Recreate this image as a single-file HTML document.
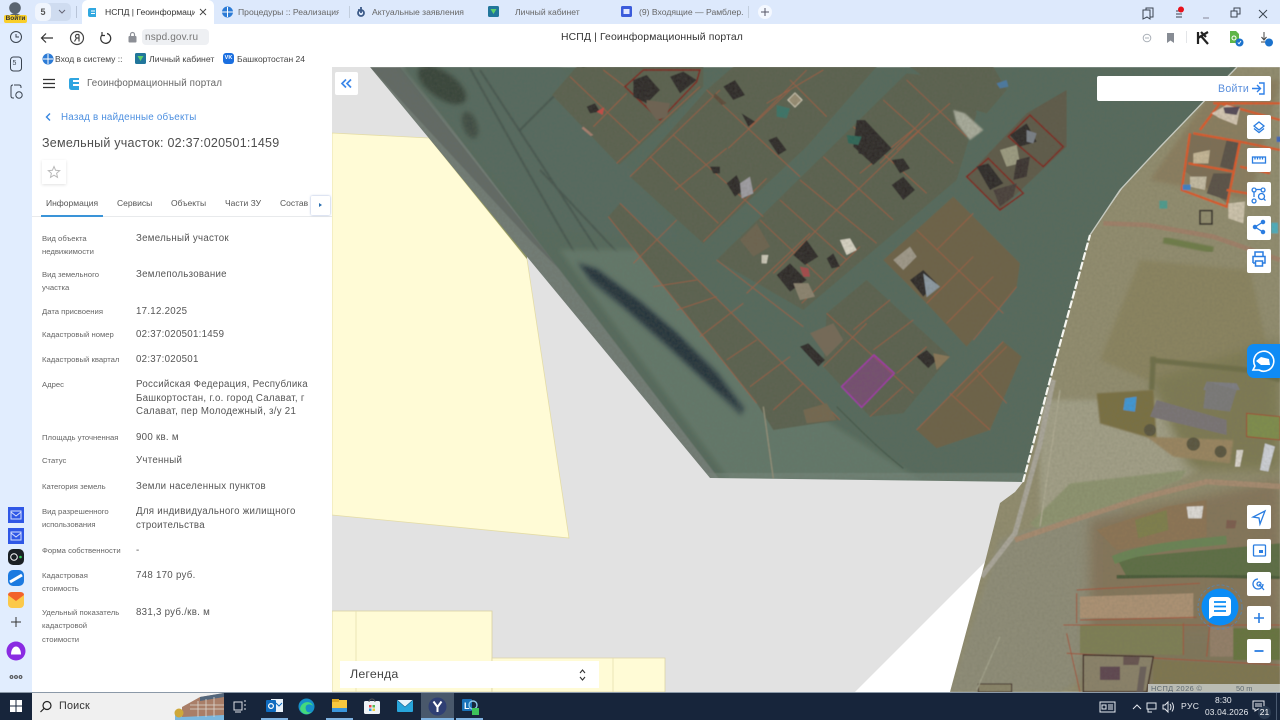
<!DOCTYPE html>
<html lang="ru"><head><meta charset="utf-8"><title>НСПД | Геоинформационный портал</title>
<style>
html,body{margin:0;padding:0;width:1280px;height:720px;overflow:hidden;background:#fff;font-family:"Liberation Sans",sans-serif}
.t{position:absolute;white-space:nowrap;line-height:1}
.b{position:absolute;background:#fff;border-radius:2px}
.l{position:absolute;left:42px;font-size:7.7px;line-height:13.4px;color:#666;white-space:nowrap}
.v{position:absolute;left:136px;margin-top:1px;font-size:9.7px;line-height:13.6px;color:#555;letter-spacing:.28px;white-space:nowrap}
.tab{position:absolute;font-size:8.6px;color:#666;white-space:nowrap;line-height:1;top:8px}
svg{position:absolute;overflow:visible}
</style></head><body>

<!-- MAP -->
<svg style="left:332px;top:67px" width="948" height="625" viewBox="332 67 948 625">
<defs>
<filter id="bl" x="-20%" y="-20%" width="140%" height="140%"><feGaussianBlur stdDeviation="2.5"/></filter>
<filter id="bw" x="-20%" y="-20%" width="140%" height="140%"><feGaussianBlur stdDeviation="1.6"/></filter>
<filter id="bs" x="-20%" y="-20%" width="140%" height="140%"><feGaussianBlur stdDeviation=".5"/></filter>
<filter id="bb" x="-20%" y="-20%" width="140%" height="140%"><feGaussianBlur stdDeviation="6"/></filter>
<filter id="all" x="0" y="0" width="100%" height="100%"><feGaussianBlur stdDeviation=".55"/></filter>
<filter id="noise" x="0" y="0" width="100%" height="100%"><feTurbulence type="fractalNoise" baseFrequency=".4" numOctaves="2" seed="4"/><feColorMatrix values="0 0 0 0 .15  0 0 0 0 .15  0 0 0 0 .1  0 0 0 .4 -.1"/></filter>
<clipPath id="dk"><polygon points="370,67 1237,67 1160,147 1120,190 1090,235 1050,380 1023,482 710,478"/></clipPath>
<clipPath id="sat"><polygon points="1230,67 1280,67 1280,692 950,692 985,562 1000,503 1015,492 1023,482 1050,380 1090,235 1135,170"/></clipPath>
</defs>
<rect x="332" y="67" width="948" height="625" fill="#e2e2e2"/>
<polygon points="985,562 950,692 855,692" fill="#fff"/>
<!-- yellow -->
<polygon points="332,133 429,138 527,259 569,538 332,515" fill="#fffbd6" stroke="#e4dca6" stroke-width=".8"/>
<polygon points="429,138 445,140 459,149 527,230 527,259" fill="#8d9462"/>
<polygon points="332,611 492,611 492,692 332,692" fill="#fffbd6" stroke="#d8d0a0" stroke-width=".8"/>
<line x1="356" y1="611" x2="356" y2="692" stroke="#e6dfae" stroke-width=".8"/>
<polygon points="492,658 665,658 665,692 492,692" fill="#fffbd6" stroke="#dcd4a6" stroke-width=".8"/>
<line x1="613" y1="658" x2="613" y2="692" stroke="#e6dfae" stroke-width=".8"/>

<!-- satellite base -->
<g clip-path="url(#sat)"><g filter="url(#all)">
<rect x="940" y="67" width="340" height="625" fill="#928d6f"/>
<polygon points="1040,400 1160,400 1200,470 1040,530" fill="#a3a088" filter="url(#bl)"/>
<polygon points="1000,540 1120,500 1160,640 1060,692 950,692" fill="#8f8d78" filter="url(#bl)"/>
<polygon points="1140,260 1250,270 1270,360 1170,390 1100,360" fill="#8b8460" filter="url(#bl)"/>
<polygon points="1150,180 1250,200 1280,80 1220,80" fill="#8b7e5e" filter="url(#bl)"/>
<polygon points="1150,380 1280,340 1280,470 1190,470" fill="#7e7a52" filter="url(#bb)"/>
<polygon points="1090,520 1280,480 1280,640 1090,640" fill="#85745a" filter="url(#bb)"/>
<polygon points="1090,630 1280,630 1280,692 1080,692" fill="#80765a" filter="url(#bb)"/>
<!-- z5 features -->
<g transform="translate(1080 70) scale(.3333)" fill="none">
<path d="M330,190 L310,300 L440,400 L480,215 Z" fill="#7d6e55"/>
<path d="M440,210 L480,220 L460,300 L420,290Z M400,310 L455,310 L440,390 L380,370Z" fill="#5a5148"/>
<path d="M340,190 L480,215 L600,240 M330,190 L305,360 L440,410 L480,215 M325,280 L460,305 M360,180 L420,100 L600,150 M400,100 L600,100 M440,360 L560,380 M480,290 L570,310" stroke="#dc5a2a" stroke-width="7"/>
<polygon points="395,130 440,105 480,115 470,165 420,145" fill="#d6c8b4"/>
<polygon points="430,112 480,110 470,135 435,130" fill="#554a58"/>
<polygon points="340,250 390,240 385,280 340,280" fill="#c7b898"/>
<polygon points="330,320 380,320 375,360 330,350" fill="#c5bca4"/>
<rect x="308" y="344" width="24" height="16" fill="#3c80c8"/>
<polygon points="445,400 495,395 490,460 445,445" fill="#cfc5ae"/>
<rect x="360" y="422" width="36" height="40" fill="none" stroke="#35302a" stroke-width="5"/>
<rect x="238" y="392" width="24" height="24" fill="#4d9d90"/>
<rect x="574" y="458" width="20" height="32" fill="#4db0c0"/>
<rect x="590" y="200" width="20" height="16" fill="#3c66c0"/>
<path d="M70,460 L200,465 L400,500 L600,570" stroke="#a08068" stroke-width="14"/>
<path d="M250,510 L400,540" stroke="#6e7c48" stroke-width="20" filter="url(#bl)"/>
<path d="M210,870 L500,900 L600,930 M220,860 L215,960" stroke="#6e6e48" stroke-width="16" filter="url(#bl)"/>
<polygon points="380,935 470,940 480,960 370,960" fill="#7e7e84"/>
</g>
<!-- z10 features -->
<g transform="translate(940 380) scale(.3333)" fill="none">
<polygon points="470,40 640,30 650,180 480,130" fill="#7a6f42" filter="url(#bl)"/>
<polygon points="620,170 880,180 870,250 700,230" fill="#9a8560" filter="url(#bl)"/>
<polygon points="650,60 860,120 860,165 630,110" fill="#7a7476"/>
<polygon points="800,5 890,30 870,95 790,85" fill="#7b7a7a"/>
<polygon points="555,55 590,50 585,95 550,90" fill="#3f98d8"/>
<polygon points="920,100 1020,110 1020,180 920,170" fill="#7f8e4d" stroke="#a34a30" stroke-width="3"/>
<polygon points="890,210 910,210 900,260 885,260" fill="#ddd8d0"/>
<polygon points="975,190 1005,200 985,275 960,270" fill="#d0d3da"/>
<circle cx="630" cy="150" r="18" fill="#5a5640"/><circle cx="760" cy="192" r="20" fill="#5a5640"/><circle cx="842" cy="215" r="18" fill="#5a5640"/>
<path d="M340,0 L300,190 L250,370 L225,460 L125,590" stroke="#aba79b" stroke-width="15"/>
<path d="M225,480 L400,420 L620,350 L800,305 L1030,320" stroke="#a78b70" stroke-width="16"/>
<polygon points="270,430 390,310 740,270 720,300 500,380 290,445" fill="#8e9470" filter="url(#bl)"/>
<polygon points="470,450 680,380 800,360 800,470 530,510" fill="#8d7454"/>
<polygon points="585,420 680,390 685,450 595,475" fill="#7f7f4d"/>
<polygon points="740,380 790,378 785,415 745,415" fill="#dfdcd8"/>
<polygon points="860,420 890,422 885,445 858,445" fill="#7c5c4e"/>
<polygon points="530,535 1020,490 1020,590 560,590" fill="#5c6e44"/>
<path d="M520,540 C620,500 760,490 860,480" stroke="#6a8454" stroke-width="26" filter="url(#bs)"/>
<path d="M530,590 C620,590 800,580 1020,595" stroke="#4a5a38" stroke-width="12" filter="url(#bs)"/>
<polygon points="420,650 760,640 760,715 420,715" fill="#ad9274"/>
<polygon points="420,735 730,730 730,825 420,820" fill="#7e7f55"/>
<polygon points="810,740 880,740 880,830 810,830" fill="#947f68"/>
<polygon points="880,745 1020,745 1020,840 880,840" fill="#66743f"/>
<polygon points="640,840 1020,860 1020,936 640,936" fill="#7f7650"/>
<path d="M410,630 L780,610 M370,735 L1020,735 M410,640 L410,730 M380,820 L1020,855 M730,730 L730,825 M810,730 L800,830 M420,720 L770,712 M380,760 L420,936" stroke="#a5533a" stroke-width="3"/>
<polygon points="430,825 640,830 620,936 430,936" fill="#8b8269" stroke="#3c2622" stroke-width="4"/>
<polygon points="480,860 540,860 540,900 480,900" fill="#5e4650"/>
<polygon points="550,830 600,830 595,855 550,855" fill="#665350"/>
<polygon points="600,860 620,860 610,936 590,936" fill="#6a5f5a"/>
<rect x="115" y="912" width="100" height="24" fill="#8a8468" stroke="#3c2622" stroke-width="3"/>
<path d="M180,770 L110,930" stroke="#a3a28c" stroke-width="4" filter="url(#bs)"/>
<path d="M360,30 L300,440" stroke="#aeaa92" stroke-width="4" filter="url(#bs)"/>
</g>
<rect x="940" y="67" width="340" height="625" filter="url(#noise)"/>
</g></g>

<!-- dark imagery -->
<g clip-path="url(#dk)"><g filter="url(#all)">
<rect x="360" y="67" width="880" height="420" fill="#566b5d"/>
<polygon points="370,67 405,67 720,480 705,480" fill="#727c76"/>
<polygon points="370,67 400,67 560,270 530,240" fill="#626a66"/>
<polygon points="400,67 560,67 680,240 540,230" fill="#566a5e" filter="url(#bl)"/>
<ellipse cx="442" cy="85" rx="28" ry="13" transform="rotate(35 442 85)" fill="#39443b" filter="url(#bl)"/>
<ellipse cx="470" cy="125" rx="14" ry="7" transform="rotate(70 470 125)" fill="#414d45" filter="url(#bl)"/>
<path d="M470,68 C510,140 560,230 600,295 M540,170 L690,330 M480,70 L620,285 M590,60 L520,130" stroke="#475650" stroke-width="2" fill="none" filter="url(#bs)"/>
<polygon points="560,250 730,480 920,480 760,380 640,250" fill="#64786a" filter="url(#bl)"/>
<polygon points="577,262 597,268 640,300 677,332 718,372 745,408 741,416 715,392 670,350 625,310 590,282" fill="#33424a" opacity=".75" filter="url(#bl)"/>
<polygon points="582,266 597,271 640,303 677,335 716,375 742,410 715,388 670,346 625,306 592,278" fill="#26343c" filter="url(#bw)"/>
<rect x="700" y="473" width="340" height="12" fill="#7a8a80" opacity=".5"/>
<g transform="translate(560 70) scale(.3333)">
<g fill="#5b6250">
<polygon points="-24,75 50,-10 430,-10 430,50 177,285"/>
<polygon points="210,320 440,60 520,-10 950,-10 740,230 430,520"/>
<polygon points="470,570 1040,10 1230,30 1250,130 1190,330 730,720"/>
<polygon points="800,730 920,630 1170,860 1030,1030 930,1040 790,890"/>
<polygon points="145,440 180,400 840,1050 640,1080 590,1000"/>
<polygon points="1050,-10 1300,-10 1340,60 1280,130 1210,110"/>
</g>
<g fill="#6d6248">
<polygon points="970,570 1180,380 1380,580 1370,650 1220,830 1100,700"/>
<polygon points="1070,1080 1330,815 1385,860 1290,1080 1130,1135"/>
</g>
<polygon points="1220,320 1400,130 1520,60 1520,230 1320,420" fill="#5e5a4a"/>
<polygon points="1180,120 1215,130 1270,180 1230,210 1190,160" fill="#a9ac9c" filter="url(#bl)"/>
<g stroke="#aa5d40" stroke-width="2.4" fill="none" opacity=".9">
<path d="M30,20 L240,220 M170,280 L420,50 M100,170 L200,70 M130,0 L195,50"/>
<path d="M210,320 L480,60 M340,195 L610,440 M270,260 L475,460 M345,360 L500,235 M430,515 L620,325 M440,60 L720,320 M505,235 L690,60 M620,100 L790,0 M690,30 L800,140 M570,170 L740,0"/>
<path d="M600,450 L790,630 M660,390 L860,570 M720,330 L950,520 M790,260 L1000,450 M880,170 L1100,370 M970,90 L1180,280 M1040,30 L1220,200 M470,570 L730,770 M560,670 L750,490 M640,610 L880,370 M725,700 L900,530 M830,420 L1080,180 M900,310 L1070,170 M960,280 L1110,130 M1010,240 L1170,100"/>
<path d="M800,730 L1060,970 M880,780 L990,690 M940,840 L1060,750 M1010,910 L1100,830 M790,890 L920,760 M930,1040 L1030,950"/>
<path d="M1070,480 L1330,730 M1130,540 L1240,430 M1160,760 L1300,620 M1100,700 L1240,560 M1240,810 L1370,650"/>
<path d="M1190,980 L1340,830 M1070,1080 L1330,815 M1170,970 L1290,1080 M1250,900 L1340,1000"/>
<path d="M145,440 L590,1000 M180,400 L840,1050 M220,580 L350,450 M280,650 L410,630 M350,720 L470,680 M420,800 L550,700 M500,870 L590,810 M570,950 L690,860 M640,1020 L730,940"/>
</g>
<g fill="none" stroke="#7b2a22" stroke-width="5">
<polygon points="195,50 250,0 420,0 410,35 300,150"/>
<polygon points="1220,320 1285,265 1390,370 1320,420"/>
<polygon points="1345,200 1410,135 1510,230 1450,290"/>
</g>
<g fill="#2f2b2a">
<polygon points="220,30 260,15 300,60 260,100 220,80"/>
<polygon points="330,20 370,5 410,30 360,70"/>
<polygon points="260,90 330,100 320,140 290,150 260,110" fill="#6e6352"/>
<polygon points="80,110 105,100 120,125 90,130"/>
<polygon points="110,125 132,112 128,135" fill="#c94a44"/>
<polygon points="70,170 100,195 92,198 65,175" fill="#aa8070"/>
<polygon points="490,50 525,30 555,75 520,90"/>
<polygon points="465,70 500,100 485,105 460,80" fill="#5d4b3a"/>
<polygon points="545,130 585,155 565,170"/>
<polygon points="625,210 650,200 680,240 655,255"/>
<polygon points="650,105 690,115 680,145 650,140" fill="#3c7468"/>
<rect x="690" y="75" width="30" height="30" transform="rotate(45 705 90)" fill="#998e74" stroke="#cfc8b4" stroke-width="3"/>
<polygon points="890,150 915,150 995,235 940,285 880,230"/>
<polygon points="860,195 905,200 895,225 865,220" fill="#2e6658"/>
<polygon points="895,235 920,235 915,255 895,250"/>
<polygon points="995,270 1030,265 1050,295 1020,310"/>
<polygon points="995,345 1030,320 1065,360 1030,390"/>
<polygon points="450,290 480,290 480,310 460,310"/>
<polygon points="500,340 530,315 550,360 525,380"/>
<polygon points="540,340 570,320 580,370 545,385" fill="#a09ea4"/>
<polygon points="700,555 740,510 775,560 735,585"/>
<polygon points="800,565 820,550 840,590 815,595"/>
<polygon points="840,510 870,505 890,540 860,555" fill="#d9d5c6"/>
<polygon points="650,615 690,580 740,630 690,665"/>
<polygon points="720,590 745,595 750,620 730,620" fill="#a84a4c"/>
<polygon points="700,640 745,640 765,680 720,690" fill="#8d8470"/>
<polygon points="605,555 625,555 620,580 605,580" fill="#d0ccbc"/>
<polygon points="540,510 590,460 630,530 580,560" fill="#6d6450"/>
<polygon points="1050,630 1090,600 1130,640 1090,680"/>
<polygon points="1090,610 1140,650 1100,682" fill="#8d9aa4"/>
<polygon points="1000,570 1050,530 1070,560 1030,600" fill="#a0998a"/>
<polygon points="720,830 745,820 795,870 775,890"/>
<polygon points="750,790 820,760 850,810 800,860" fill="#756b58"/>
<polygon points="1070,860 1100,840 1130,870 1105,895"/>
<polygon points="1120,850 1170,860 1130,900" fill="#8a7758"/>
<polygon points="730,1020 800,1000 830,1050 740,1060" fill="#746850"/>
<polygon points="1250,290 1285,280 1330,340 1290,360"/>
<polygon points="1300,360 1370,340 1360,380 1320,410" fill="#4a403c"/>
<polygon points="1350,195 1400,160 1430,215 1380,230"/>
<polygon points="1320,240 1370,225 1380,280 1340,290" fill="#9d9c82"/>
<polygon points="1370,270 1410,260 1400,320 1360,330" fill="#3c3432"/>
<polygon points="1400,180 1430,190 1420,220 1400,215" fill="#7a8088"/>
<polygon points="1310,40 1340,30 1345,50 1320,55" fill="#4a7aa4"/>
</g>
<polygon points="845,950 942,855 1003,910 905,1012" fill="#a030a8" fill-opacity=".38" stroke="#a832b0" stroke-width="4"/>
<path d="M610,1010 L640,1225" stroke="#94907a" stroke-width="4" fill="none"/>
<path d="M830,1010 C900,1080 960,1140 1030,1195" stroke="#46594c" stroke-width="4" fill="none"/>
</g>
<rect x="360" y="67" width="880" height="420" filter="url(#noise)"/>
</g></g>
<!-- edge -->
<path d="M1090,235 L1120,190 L1160,147 L1237,67" stroke="#c4c8be" stroke-width="1.400" fill="none"/>
<path d="M1023,482 L1050,380 L1090,235" stroke="#f6f6f0" stroke-width="2.200" fill="none" stroke-dasharray="8 2"/>
<!-- scale -->
<rect x="1148" y="684" width="132" height="8" fill="#cfd4d4" fill-opacity=".75"/>
<text x="1151" y="691" font-family="Liberation Sans,sans-serif" font-size="7.400" fill="#5f6a72" letter-spacing=".4">НСПД 2026 ©</text>
<text x="1236" y="691" font-family="Liberation Sans,sans-serif" font-size="7.400" fill="#5f6a72">50 m</text>
</svg>

<!-- map controls -->
<div class="b" style="left:335px;top:72px;width:23px;height:23px"></div>
<svg style="left:335px;top:72px" width="23" height="23" fill="none" stroke="#3b86e8" stroke-width="1.700"><path d="M11,7.500 L7,11.500 L11,15.500 M16,7.500 L12,11.500 L16,15.500"/></svg>

<div class="b" style="left:1097px;top:76px;width:174px;height:25px"></div>
<div class="t" style="left:1218px;top:84px;font-size:10.600px;color:#5a8fdc;letter-spacing:.3px">Войти</div>
<svg style="left:1251px;top:81px" width="15" height="15" fill="none" stroke="#2f80e8" stroke-width="1.400"><path d="M1,7.500 H9 M6,4 L9.500,7.500 L6,11 M8,2 H13 V13 H8"/></svg>

<div class="b" style="left:1247px;top:115px;width:24px;height:24px"></div>
<div class="b" style="left:1247px;top:148px;width:24px;height:24px"></div>
<div class="b" style="left:1247px;top:182px;width:24px;height:24px"></div>
<div class="b" style="left:1247px;top:216px;width:24px;height:24px"></div>
<div class="b" style="left:1247px;top:249px;width:24px;height:24px"></div>
<div class="b" style="left:1247px;top:505px;width:24px;height:24px"></div>
<div class="b" style="left:1247px;top:539px;width:24px;height:24px"></div>
<div class="b" style="left:1247px;top:572px;width:24px;height:24px"></div>
<div class="b" style="left:1247px;top:606px;width:24px;height:24px"></div>
<div class="b" style="left:1247px;top:639px;width:24px;height:24px"></div>
<svg style="left:1247px;top:115px" width="24" height="560" fill="none" stroke="#2a7de1" stroke-width="1.300">
<path d="M12,7 L17,11 L12,15 L7,11Z M7,13.500 L12,17.500 L17,13.500"/>
<rect x="5.500" y="42" width="13" height="6" /><path d="M8,42 v2.500 M10.500,42 v2.500 M13,42 v2.500 M15.500,42 v2.500"/>
<path d="M7,73 a2,2 0 1 0 .1,0 M16,73 a2,2 0 1 0 .1,0 M7,84 a2,2 0 1 0 .1,0 M9,74.500 H14 M7,77 V82" /><circle cx="14.500" cy="81.500" r="3"/><path d="M16.600,83.600 L18.500,85.600"/>
<path d="M16,107 L8,112 L16,117" /><circle cx="16" cy="107" r="1.600" fill="#2a7de1"/><circle cx="8" cy="112" r="1.600" fill="#2a7de1"/><circle cx="16" cy="117" r="1.600" fill="#2a7de1"/>
<path d="M8,141 V137 H16 V141 M6,148 V141.500 H18 V148 H15 M9,148 H6 M8.500,146 H15.500 V151 H8.500Z" stroke-width="1.500"/>
<path d="M18,396 L6,402 L12,403 L13,409Z" />
<rect x="6.500" y="430" width="12" height="11" rx="1"/><rect x="12" y="435" width="4" height="3" fill="#2a7de1" stroke="none"/>
<path d="M11,464 a5,5 0 1 0 5,5"/><circle cx="12" cy="469" r="2"/><path d="M12,469 L17,475"/>
<path d="M7,503 H17 M12,498 V508" stroke-width="1.600"/>
<path d="M7.500,536 H16.500" stroke-width="1.800"/>
</svg>

<!-- floating blue -->
<div style="position:absolute;left:1247px;top:344px;width:33px;height:34px;background:#0f8bf5;border-radius:7px 0 0 7px"></div>
<svg style="left:1250px;top:349px" width="26" height="25" fill="none" stroke="#fff" stroke-width="1.600"><path d="M3,21 L5,17 a10,10 0 1 1 4,4Z"/><path d="M6,12 L11,8 L19,10 L20,16 L11,16Z" fill="#fff" stroke="none"/></svg>
<svg style="left:1196px;top:583px" width="48" height="48" fill="none"><circle cx="24" cy="24" r="22" stroke="#4f88c0" stroke-width="1" stroke-dasharray="3 2" opacity=".7"/><circle cx="24" cy="24" r="18.500" fill="#0a8cf5"/><path d="M13,18 a4,4 0 0 1 4,-4 H31 a4,4 0 0 1 4,4 V29 a4,4 0 0 1 -4,4 H17 L13,36Z" fill="#fff"/><path d="M18,19 H30 M18,23.500 H30 M18,28 H30" stroke="#0a8cf5" stroke-width="1.800"/></svg>

<!-- legend -->
<div style="position:absolute;left:340px;top:661px;width:259px;height:27px;background:#fff"></div>
<div class="t" style="left:350px;top:668px;font-size:12.400px;color:#444;letter-spacing:.2px">Легенда</div>
<svg style="left:578px;top:668px" width="9" height="14" fill="none" stroke="#333" stroke-width="1.100"><path d="M2,5 L4.500,2 L7,5 M2,9 L4.500,12 L7,9"/></svg>

<!-- left strip -->
<div style="position:absolute;left:0;top:24px;width:32px;height:668px;background:#e1edfe"></div>
<!-- tab strip -->
<div style="position:absolute;left:0;top:0;width:1280px;height:24px;background:#dde9fc"></div>
<div style="position:absolute;left:32px;top:24px;width:1248px;height:43px;background:#fff;border-radius:6px 0 0 0"></div>
<div style="position:absolute;left:82px;top:0;width:132px;height:24px;background:#fff;border-radius:6px 6px 0 0"></div>

<!-- profile -->
<svg style="left:6px;top:1px" width="20" height="20"><circle cx="9" cy="7" r="5.800" fill="#5a6470"/><path d="M2,17 C3,11 15,11 16,17Z" fill="#5a6470"/></svg>
<div style="position:absolute;left:4px;top:15px;width:23px;height:8px;background:#f9cf2b;border-radius:2px;font-size:6.500px;line-height:8px;text-align:center;color:#333;font-weight:bold">Войти</div>
<!-- workspace pill -->
<div style="position:absolute;left:35px;top:3px;width:36px;height:18px;background:#cfdcf0;border-radius:5px"></div>
<div style="position:absolute;left:35px;top:3px;width:16px;height:18px;background:#f0f5fd;border-radius:5px;text-align:center;font-size:9px;line-height:18px;color:#555;font-weight:bold">5</div>
<svg style="left:57px;top:8px" width="10" height="8" fill="none" stroke="#667" stroke-width="1"><path d="M2,2 L5,5 L8,2"/></svg>
<div style="position:absolute;left:76px;top:6px;width:1px;height:12px;background:#b8c4d8"></div>

<!-- tabs -->
<svg style="left:87px;top:7px" width="11" height="11"><path d="M3,1 H9 V10 H3 Q1,10 1,8 V3 Q1,1 3,1Z" fill="#31a8e0"/><path d="M4,4 H8 M4,6.500 H8" stroke="#fff" stroke-width="1"/></svg>
<div class="tab" style="left:105px;color:#333;width:90px;overflow:hidden">НСПД | Геоинформаци</div>
<svg style="left:199px;top:8px" width="8" height="8" stroke="#444" stroke-width=".9"><path d="M1,1 L7,7 M7,1 L1,7"/></svg>
<svg style="left:221px;top:6px" width="13" height="12"><circle cx="6.500" cy="6" r="5.500" fill="#2c7bd6"/><path d="M1,6 H12 M6.500,1 V11" stroke="#fff" stroke-width="1"/></svg>
<div class="tab" style="left:238px;width:101px;overflow:hidden">Процедуры :: Реализация</div>
<div style="position:absolute;left:349px;top:6px;width:1px;height:12px;background:#c2cede"></div>
<svg style="left:355px;top:6px" width="11" height="12"><path d="M6,1 V7 M3,4 H5 M3,7 a3,3 0 1 0 6,0 a3,3 0 1 0 -6,0" stroke="#3c5a88" stroke-width="1.800" fill="none"/></svg>
<div class="tab" style="left:372px">Актуальные заявления</div>
<svg style="left:488px;top:6px" width="12" height="12"><rect width="11" height="11" rx="1.500" fill="#21769b"/><path d="M2.500,3 H8.500 L5.500,8Z" fill="#5fd06a"/></svg>
<div class="tab" style="left:515px">Личный кабинет</div>
<svg style="left:621px;top:6px" width="12" height="12"><rect width="11" height="11" rx="1.500" fill="#3b5bdb"/><rect x="2.500" y="3" width="6" height="5" fill="#dfe6ff"/></svg>
<div class="tab" style="left:639px;width:106px;overflow:hidden">(9) Входящие — Рамблер.</div>
<div style="position:absolute;left:748px;top:6px;width:1px;height:12px;background:#c2cede"></div>
<div style="position:absolute;left:758px;top:5px;width:14px;height:14px;border-radius:50%;background:#f4f8ff"></div>
<svg style="left:760px;top:7px" width="10" height="10" stroke="#556" stroke-width="1"><path d="M1,5 H9 M5,1 V9"/></svg>

<!-- window controls -->
<svg style="left:1140px;top:4px" width="140" height="18" fill="none" stroke="#3a4450" stroke-width="1">
<path d="M3,6 H10 V15 L7,13 L3,15Z M6,6 V4 H13 V13 H10"/>
<path d="M36,7 H42 M36,10 H42 M36,13 H42"/><circle cx="41" cy="5.500" r="3" fill="#e8121c" stroke="none"/>
<path d="M63,14 H69" stroke="#889"/>
<path d="M91,7 H97 V13 H91Z M94,7 V4 H100 V10 H97" />
<path d="M119,6 L127,14 M127,6 L119,14"/>
</svg>

<!-- nav bar -->
<svg style="left:40px;top:30px" width="80" height="16" fill="none" stroke="#333" stroke-width="1.200">
<path d="M2,8 H13 M6,3.500 L1.500,8 L6,12.500"/>
<circle cx="37" cy="8" r="6.500" stroke="#444"/><path d="M39,4.500 V11.500 M39,4.500 H36.500 A2,2 0 0 0 36.500,8 H39 M36.500,8 L34.500,11.500" stroke="#444"/>
<path d="M67,3.500 A5,5 0 1 1 62,5 M62,2 V5.500 H65" stroke="#333"/>
</svg>
<svg style="left:127px;top:30px" width="11" height="14"><rect x="1.500" y="6" width="8" height="6.500" rx="1" fill="#8c8f96"/><path d="M3.500,6 V4.500 a2,2 0 0 1 4,0 V6" fill="none" stroke="#8c8f96" stroke-width="1.200"/></svg>
<div style="position:absolute;left:142px;top:29px;width:67px;height:16px;background:#eef0f3;border-radius:4px"></div>
<div class="t" style="left:145px;top:33px;font-size:10px;color:#777;letter-spacing:.15px">nspd.gov.ru</div>
<div class="t" style="left:561px;top:33px;font-size:10.400px;color:#333;letter-spacing:.14px">НСПД | Геоинформационный портал</div>

<svg style="left:1140px;top:28px" width="140" height="22" fill="none">
<circle cx="7" cy="10" r="3.800" stroke="#aab0b8" stroke-width="1"/><path d="M5,10 H9" stroke="#aab0b8"/>
<path d="M27,5 H34 V15 L30.500,12.500 L27,15Z" fill="#878c94"/>
<path d="M58,4 L58,16 M58,10 L68,4 M61,8 L68,16 M61,4 L66,9" stroke="#222" stroke-width="2.200"/>
<path d="M90,3 H96 L99,6 V15 H90Z" fill="#5fb548"/><circle cx="94" cy="10" r="2" fill="none" stroke="#fff"/><circle cx="99.500" cy="14.500" r="4" fill="#1b72cc"/><path d="M97.800,14.500 L99,15.800 L101,13" stroke="#fff" stroke-width=".9"/>
<path d="M124,4 V11 M121.500,9 L124,12 L126.500,9 M121,14 H125" stroke="#444" stroke-width="1"/><circle cx="129" cy="14.500" r="4" fill="#1b72cc"/>
</svg>
<div style="position:absolute;left:1186px;top:31px;width:1px;height:12px;background:#e3e5e8"></div>

<!-- bookmarks -->
<svg style="left:42px;top:53px" width="12" height="12"><circle cx="6" cy="6" r="5.500" fill="#2c7bd6"/><path d="M1,6 H11 M6,1 V11" stroke="#fff"/></svg>
<div class="t" style="left:55px;top:55px;font-size:8.500px;color:#444;width:69px;overflow:hidden">Вход в систему :: Г</div>
<svg style="left:135px;top:53px" width="12" height="12"><rect width="11" height="11" rx="1.500" fill="#21769b"/><path d="M2.500,3 H8.500 L5.500,8Z" fill="#5fd06a"/></svg>
<div class="t" style="left:149px;top:55px;font-size:8.700px;color:#444">Личный кабинет</div>
<div style="position:absolute;left:223px;top:53px;width:11px;height:11px;background:#1b6fe0;border-radius:3px;color:#fff;font-size:5.500px;font-weight:bold;line-height:11px;text-align:center">VK</div>
<div class="t" style="left:237px;top:55px;font-size:8.500px;color:#444">Башкортостан 24</div>

<!-- left strip icons -->
<svg style="left:6px;top:28px" width="22" height="72" fill="none" stroke="#3a4450" stroke-width="1">
<circle cx="10" cy="9" r="5.500"/><path d="M10,6 V9 H13"/>
<rect x="4.500" y="29" width="11" height="14" rx="3"/>
<path d="M8,57 H13 Q15,57 15,59 V60 M5,67 V59 Q5,57 7,57 M5,67 V68 Q5,70 7,70 H8"/><circle cx="13" cy="67" r="3.200"/>
</svg>
<div class="t" style="left:12.500px;top:60px;font-size:7px;color:#3a4450">5</div>
<svg style="left:8px;top:507px" width="16" height="38"><rect width="16" height="16" fill="#2f57e6"/><rect x="3" y="4" width="10" height="8" fill="none" stroke="#d6e0ff"/><path d="M3,5 L8,9 L13,5" fill="none" stroke="#d6e0ff"/><rect y="21" width="16" height="16" fill="#2f57e6"/><rect x="3" y="25" width="10" height="8" fill="none" stroke="#d6e0ff"/><path d="M3,26 L8,30 L13,26" fill="none" stroke="#d6e0ff"/></svg>
<svg style="left:8px;top:549px" width="16" height="60"><rect width="16" height="16" rx="5" fill="#1a2024"/><circle cx="6" cy="8" r="3.300" fill="none" stroke="#fff" stroke-width="1"/><circle cx="12.500" cy="8" r="1.300" fill="#2ed158"/><rect y="21" width="16" height="16" rx="5" fill="#1c7ae0"/><path d="M2,33 L14,26" stroke="#fff" stroke-width="3"/><rect y="43" width="16" height="16" rx="4" fill="#fbc94a"/><path d="M0,46 Q0,43 4,43 H12 Q16,43 16,46 L8,52Z" fill="#f2622c"/></svg>
<svg style="left:10px;top:616px" width="12" height="12" stroke="#333" stroke-width="1"><path d="M1,6 H11 M6,1 V11"/></svg>
<svg style="left:6px;top:641px" width="20" height="20"><circle cx="10" cy="10" r="9.500" fill="#8a2be2"/><path d="M5,13.500 C5,9 7,5.500 10,5.500 C13,5.500 15,9 15,13.500Z" fill="#fff"/></svg>
<svg style="left:9px;top:674px" width="15" height="6" fill="none" stroke="#444" stroke-width="1"><circle cx="2.500" cy="3" r="1.400"/><circle cx="7" cy="3" r="1.400"/><circle cx="11.500" cy="3" r="1.400"/></svg>

<!-- sidebar -->
<div style="position:absolute;left:32px;top:67px;width:300px;height:625px;background:#fff"></div>
<svg style="left:43px;top:78px" width="13" height="11" stroke="#333" stroke-width="1.300"><path d="M0,1.500 H12 M0,5.500 H12 M0,9.500 H12"/></svg>
<svg style="left:68px;top:77px" width="13" height="14"><path d="M3,1 H11 V3 H5 V5 H11 V7 H5 V9 H11 V13 H4 Q1,13 1,10 V3 Q1,1 3,1Z" fill="#2fa5e0"/></svg>
<div class="t" style="left:87px;top:79px;font-size:9.800px;color:#666;letter-spacing:.14px">Геоинформационный портал</div>

<svg style="left:45px;top:112px" width="7" height="10" fill="none" stroke="#3585e0" stroke-width="1.400"><path d="M5,1.500 L1.500,5 L5,8.500"/></svg>
<div class="t" style="left:61px;top:113px;font-size:9.800px;color:#4c8fe0;letter-spacing:.2px">Назад в найденные объекты</div>
<div class="t" style="left:42px;top:137px;font-size:12.500px;color:#4e4e4e;letter-spacing:.25px">Земельный участок: 02:37:020501:1459</div>
<div style="position:absolute;left:42px;top:160px;width:24px;height:24px;background:#fff;box-shadow:0 1px 3px rgba(0,0,0,.12)"></div>
<svg style="left:47px;top:165px" width="14" height="14" fill="none" stroke="#b8b8b8" stroke-width="1"><path d="M7,1.500 L8.600,5.300 L12.700,5.600 L9.600,8.300 L10.500,12.300 L7,10.200 L3.500,12.300 L4.400,8.300 L1.300,5.600 L5.400,5.300Z"/></svg>

<div class="t" style="left:46px;top:199px;font-size:8.500px;color:#555">Информация</div>
<div class="t" style="left:117px;top:199px;font-size:8.500px;color:#555">Сервисы</div>
<div class="t" style="left:171px;top:199px;font-size:8.500px;color:#555">Объекты</div>
<div class="t" style="left:225px;top:199px;font-size:8.500px;color:#555">Части ЗУ</div>
<div class="t" style="left:280px;top:199px;font-size:8.500px;color:#555">Состав</div>
<div style="position:absolute;left:32px;top:216px;width:300px;height:1px;background:#e8eaec"></div>
<div style="position:absolute;left:41px;top:215px;width:62px;height:1.500px;background:#3a94d8"></div>
<div style="position:absolute;left:311px;top:196px;width:19px;height:19px;background:#fff;box-shadow:0 0 2px rgba(60,100,180,.5);border-radius:1px"></div>
<div style="position:absolute;left:319px;top:203px;width:0;height:0;border-left:3px solid #2b6fb0;border-top:2.500px solid transparent;border-bottom:2.500px solid transparent"></div>

<div class="l" style="top:232px">Вид объекта<br>недвижимости</div>
<div class="v" style="top:231px">Земельный участок</div>
<div class="l" style="top:268px">Вид земельного<br>участка</div>
<div class="v" style="top:267px">Землепользование</div>
<div class="l" style="top:305px">Дата присвоения</div>
<div class="v" style="top:304px">17.12.2025</div>
<div class="l" style="top:328px">Кадастровый номер</div>
<div class="v" style="top:327px">02:37:020501:1459</div>
<div class="l" style="top:353px">Кадастровый квартал</div>
<div class="v" style="top:352px">02:37:020501</div>
<div class="l" style="top:378px">Адрес</div>
<div class="v" style="top:377px">Российская Федерация, Республика<br>Башкортостан, г.о. город Салават, г<br>Салават, пер Молодежный, з/у 21</div>
<div class="l" style="top:431px">Площадь уточненная</div>
<div class="v" style="top:430px">900 кв. м</div>
<div class="l" style="top:454px">Статус</div>
<div class="v" style="top:453px">Учтенный</div>
<div class="l" style="top:480px">Категория земель</div>
<div class="v" style="top:479px">Земли населенных пунктов</div>
<div class="l" style="top:505px">Вид разрешенного<br>использования</div>
<div class="v" style="top:504px">Для индивидуального жилищного<br>строительства</div>
<div class="l" style="top:544px">Форма собственности</div>
<div class="v" style="top:543px">-</div>
<div class="l" style="top:569px">Кадастровая<br>стоимость</div>
<div class="v" style="top:568px">748 170 руб.</div>
<div class="l" style="top:606px">Удельный показатель<br>кадастровой<br>стоимости</div>
<div class="v" style="top:605px">831,3 руб./кв. м</div>

<!-- taskbar -->
<div style="position:absolute;left:0;top:693px;width:1280px;height:27px;background:#17253b"></div>
<div style="position:absolute;left:0;top:692px;width:1280px;height:1px;background:#8b99a8"></div>
<svg style="left:10px;top:700px" width="12" height="12" fill="#fff"><rect width="5.500" height="5.500"/><rect x="6.500" width="5.500" height="5.500"/><rect y="6.500" width="5.500" height="5.500"/><rect x="6.500" y="6.500" width="5.500" height="5.500"/></svg>
<div style="position:absolute;left:32px;top:693px;width:192px;height:27px;background:#f0f0f0"></div>
<svg style="left:39px;top:700px" width="14" height="14" fill="none" stroke="#222" stroke-width="1.200"><circle cx="8" cy="5.500" r="4"/><path d="M5,8.500 L1.500,12"/></svg>
<div class="t" style="left:59px;top:701px;font-size:10.800px;color:#333;letter-spacing:.2px">Поиск</div>
<svg style="left:170px;top:693px" width="54" height="27"><rect x="5" y="20" width="49" height="7" fill="#7bb8e0"/><polygon points="12,14 30,4 54,0 54,22 12,24" fill="#a97e68"/><polygon points="30,4 54,0 54,4 30,8" fill="#54677c"/><path d="M20,12 H54 M20,16 H54 M28,8 V24 M36,6 V24 M44,4 V24" stroke="#dcd7d0" stroke-width=".8"/><circle cx="9" cy="20" r="4.500" fill="#cfa83a"/></svg>
<svg style="left:233px;top:700px" width="14" height="13" fill="none" stroke="#dce0e6" stroke-width="1"><rect x="1" y="2" width="8" height="8"/><path d="M11,1 H13 M11,5 H13 M11,9 H13 M2,12 H8"/></svg>
<svg style="left:266px;top:698px" width="17" height="16"><rect x="5" y="1" width="12" height="13" fill="#eaf3fb"/><rect x="0" y="2" width="10" height="12" rx="1" fill="#0f6cc0"/><circle cx="5" cy="8" r="2.400" fill="none" stroke="#fff" stroke-width="1.200"/><path d="M10,5 L13,8 L16,5" stroke="#0f6cc0" fill="none"/></svg>
<div style="position:absolute;left:261px;top:718px;width:27px;height:2px;background:#7fb2e0"></div>
<svg style="left:298px;top:698px" width="17" height="17"><circle cx="8.500" cy="8.500" r="8" fill="#1690c8"/><path d="M2,11 C3,3 13,2 15,8 C12,5 6,6 8,12 C9,15 13,15 14,13 C11,18 4,17 2,11Z" fill="#44d97c"/></svg>
<svg style="left:332px;top:699px" width="15" height="14"><rect y="1" width="15" height="12" fill="#f8c83e"/><rect y="0" width="7" height="3" fill="#e0a820"/><rect y="9" width="15" height="4" fill="#3a96dc"/></svg>
<div style="position:absolute;left:326px;top:718px;width:27px;height:2px;background:#7fb2e0"></div>
<svg style="left:364px;top:698px" width="16" height="16"><rect y="3" width="16" height="13" rx="1.500" fill="#eef3f7"/><path d="M5,4 a3,3 0 0 1 6,0" stroke="#555" fill="none"/><rect x="5" y="7" width="2.500" height="2.500" fill="#e44"/><rect x="8.500" y="7" width="2.500" height="2.500" fill="#5b5"/><rect x="5" y="10.500" width="2.500" height="2.500" fill="#39d"/><rect x="8.500" y="10.500" width="2.500" height="2.500" fill="#ec3"/></svg>
<svg style="left:397px;top:700px" width="16" height="12"><rect width="16" height="12" rx="1" fill="#28a6dc"/><path d="M0,0 L8,7 L16,0" fill="#e8f4fb" stroke="#15608c" stroke-width=".6"/></svg>
<div style="position:absolute;left:421px;top:693px;width:33px;height:27px;background:#49586b"></div>
<div style="position:absolute;left:421px;top:718px;width:33px;height:2px;background:#7fb2e0"></div>
<svg style="left:428px;top:697px" width="19" height="19"><circle cx="9.500" cy="9.500" r="9" fill="#2f3f73"/><path d="M5.500,4.500 L9.500,10 L13.500,4.500 M9.500,10 V15" stroke="#fff" stroke-width="2" fill="none"/></svg>
<svg style="left:462px;top:698px" width="17" height="17"><rect x="0" y="1" width="10" height="12" rx="1" fill="#1a72b8"/><text x="2" y="11" font-family="Liberation Sans,sans-serif" font-size="9" font-weight="bold" fill="#fff">L</text><circle cx="11" cy="7" r="4" fill="none" stroke="#8ec8ea" stroke-width="1.400"/><rect x="10" y="10" width="7" height="7" fill="#3dc45a"/></svg>
<div style="position:absolute;left:456px;top:718px;width:27px;height:2px;background:#7fb2e0"></div>

<!-- tray -->
<svg style="left:1099px;top:701px" width="90" height="13" fill="none" stroke="#e6eaf0" stroke-width="1">
<rect x="1" y="1" width="15" height="10"/><rect x="3" y="4" width="4" height="4"/><path d="M9,4 H14 M9,6 H14 M9,8 H14"/>
<path d="M34,8 L38,4 L42,8"/>
<rect x="48" y="2" width="9" height="6"/><path d="M49,8 V11 H53" />
<path d="M64,4 H66 L69,1 V11 L66,8 H64Z M71,3 Q73,6 71,9 M73,1.500 Q76,6 73,10.500"/>
</svg>
<div class="t" style="left:1181px;top:702px;font-size:8.600px;color:#e8ebf0;letter-spacing:.4px">РУС</div>
<div class="t" style="left:1215px;top:696px;font-size:8.500px;color:#e8ebf0">8:30</div>
<div class="t" style="left:1205px;top:708px;font-size:8.400px;color:#e8ebf0;letter-spacing:.15px">03.04.2026</div>
<svg style="left:1252px;top:700px" width="14" height="14" fill="none" stroke="#e8ebf0" stroke-width="1"><path d="M1,1 H12 V9 H6 L3,11 V9 H1Z M3,4 H10 M3,6 H10"/></svg>
<div style="position:absolute;left:1258px;top:706px;width:13px;height:13px;background:#2a3a50;border-radius:50%;color:#fff;font-size:8.500px;line-height:13px;text-align:center">21</div>
<div style="position:absolute;left:1276px;top:693px;width:1px;height:27px;background:#4a5a70"></div>
</body></html>
